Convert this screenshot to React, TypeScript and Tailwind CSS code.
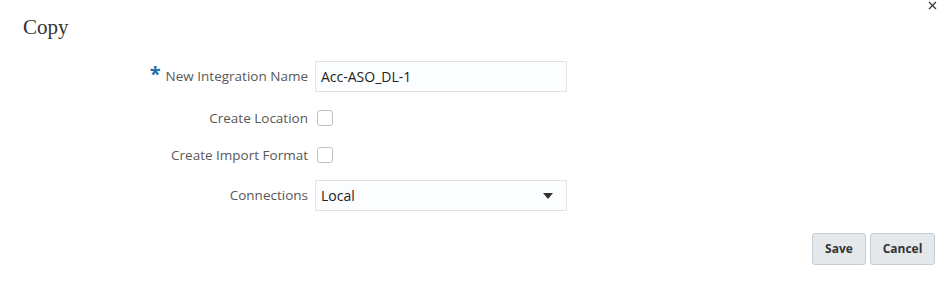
import React, { useState } from "react";

const FormRow = ({
  label,
  required,
  height,
  className,
  children,
}: {
  label: string;
  required?: boolean;
  height: string;
  className?: string;
  children: React.ReactNode;
}) => (
  <div className={`flex items-center ${height} ${className ?? ""}`}>
    <div className="w-[308px] flex justify-end items-center gap-[5px]">
      {required && (
        <span className="text-[#1c6fb0] text-[20px] leading-none font-bold -mt-[6px]">*</span>
      )}
      <span className="text-[13.5px] text-[#585858]">{label}</span>
    </div>
    <div className="ml-[7px] flex items-center">{children}</div>
  </div>
);

const Checkbox = () => {
  const [checked, setChecked] = useState(false);
  return (
    <button
      type="button"
      onClick={() => setChecked(!checked)}
      className="ml-[2px] w-[16px] h-[16px] rounded-[3px] border border-[#bcc3c9] bg-white"
    >
      {checked && <span className="block text-[10px] leading-none text-[#333]">✓</span>}
    </button>
  );
};

export default function App() {
  const [name, setName] = useState("Acc-ASO_DL-1");

  return (
    <div className="relative w-[940px] h-[294px] bg-white font-['Open_Sans',sans-serif] text-[#333]">
      {/* 닫기 버튼 */}
      <button className="absolute right-[3px] top-0 w-[10px] h-[10px] flex items-center justify-center">
        <svg width="9" height="9" viewBox="0 0 9 9">
          <path d="M1 1 L8 8 M8 1 L1 8" stroke="#333" strokeWidth="1.2" />
        </svg>
      </button>

      <h1 className="pl-[23px] pt-[14px] text-[21px] leading-[26px] font-['Liberation_Serif',serif] text-[#333]">
        Copy
      </h1>

      <div className="flex flex-col mt-[21px]">
        <FormRow label="New Integration Name" required height="h-[31px]">
          <input
            value={name}
            onChange={(e) => setName(e.target.value)}
            className="w-[252px] h-[31px] px-[5px] border border-[#dfe3e6] bg-[#fcfdfe] text-[14px] text-[#222] outline-none"
          />
        </FormRow>
        <FormRow label="Create Location" height="h-[24px]" className="mt-[14px]">
          <Checkbox />
        </FormRow>
        <FormRow label="Create Import Format" height="h-[24px]" className="mt-[13px]">
          <Checkbox />
        </FormRow>
        <FormRow label="Connections" height="h-[31px]" className="mt-[13px]">
          <div className="w-[252px] h-[31px] pl-[5px] pr-[13px] border border-[#dfe3e6] bg-[#fcfdfe] flex items-center justify-between">
            <span className="text-[14px] text-[#222]">Local</span>
            <svg width="10" height="6" viewBox="0 0 10 6">
              <path d="M0 0 L10 0 L5 6 Z" fill="#333" />
            </svg>
          </div>
        </FormRow>
      </div>

      <div className="flex justify-end gap-[4px] pr-[5px] mt-[22px]">
        <button className="w-[54px] h-[32px] rounded-[3px] border border-[#c5cdd4] bg-[#e4e8eb] text-[12px] font-bold text-[#333]">
          Save
        </button>
        <button className="w-[65px] h-[32px] rounded-[3px] border border-[#c5cdd4] bg-[#e4e8eb] text-[12px] font-bold text-[#333]">
          Cancel
        </button>
      </div>
    </div>
  );
}
